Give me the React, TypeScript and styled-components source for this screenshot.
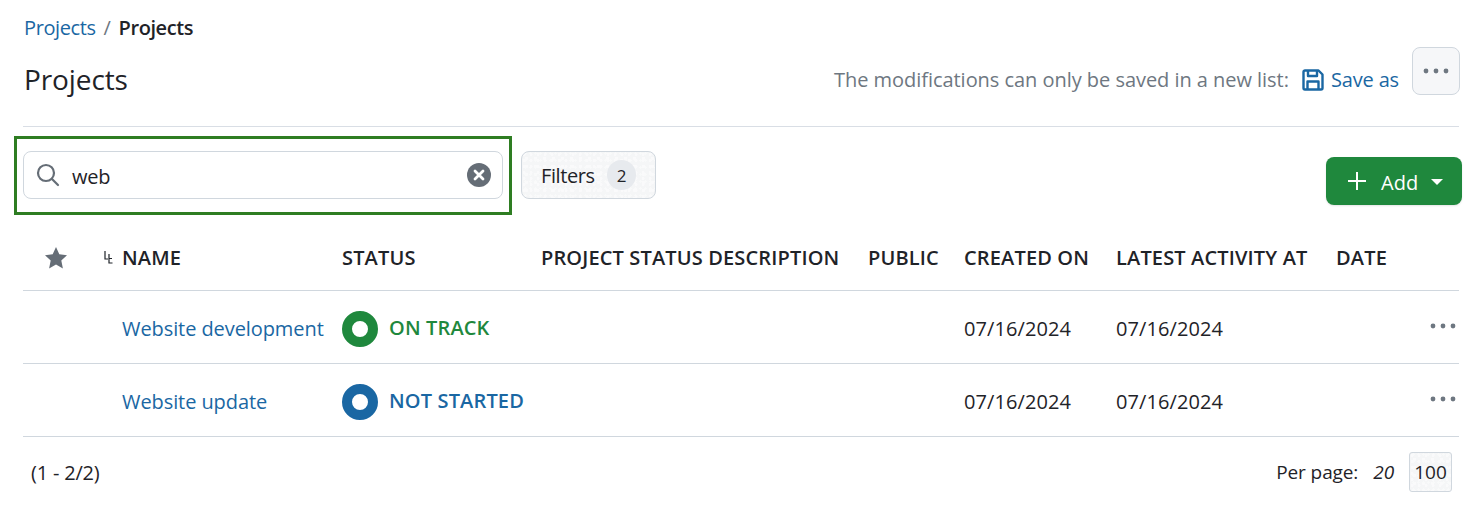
import React from 'react';
import styled, { createGlobalStyle, css } from 'styled-components';

const COLUMNS = '99px 220px 199px 327px 96px 152px 220px 123px';

const GlobalStyle = createGlobalStyle`
  html, body {
    margin: 0;
    padding: 0;
    background: #fff;
    font-family: 'Open Sans', 'Noto Sans', sans-serif;
    font-size: 20px;
    color: #1f2328;
  }
`;

// mottled fill of the secondary buttons
const speckle = css`
  background-color: #f5f6f7;
  background-image:
    radial-gradient(circle at 30% 40%, #fafafb 0 1.2px, transparent 1.6px),
    radial-gradient(circle at 70% 20%, #f9fafa 0 1px, transparent 1.4px),
    radial-gradient(circle at 50% 80%, #fafafb 0 1.4px, transparent 1.8px);
  background-size: 7px 6px, 5px 7px, 9px 8px;
`;

const Page = styled.div`
  width: 1483px;
  height: 530px;
  box-sizing: border-box;
  padding: 14px 24px 0 23px;
  overflow: hidden;
`;

const Breadcrumb = styled.nav`
  display: flex;
  align-items: center;
  gap: 8px;
  height: 28px;
  line-height: 28px;
  padding-left: 1px;
  font-size: 20px;
  letter-spacing: -0.4px;
`;

const Crumb = styled.a`
  color: #1a67a3;
`;

const Separator = styled.span`
  color: #6e7781;
`;

const CurrentCrumb = styled.span`
  font-weight: 600;
  color: #1f2328;
`;

const Header = styled.header`
  display: flex;
  align-items: center;
  justify-content: space-between;
  height: 85px;
  padding: 0 0 9px 1px;
  box-sizing: border-box;
  border-bottom: 1px solid #d9dee5;
`;

const Title = styled.h1`
  margin: 0 0 2px;
  font-size: 28px;
  font-weight: 400;
  letter-spacing: -0.1px;
  color: #1f2328;
`;

const HeaderActions = styled.div`
  display: flex;
  align-items: center;
`;

const Notice = styled.span`
  color: #6e7781;
  letter-spacing: -0.04px;
`;

const SaveLink = styled.a`
  display: flex;
  align-items: center;
  gap: 7px;
  margin-left: 13px;
  color: #1a67a3;
  letter-spacing: -0.15px;
`;

const MoreButton = styled.button`
  display: flex;
  align-items: center;
  justify-content: center;
  width: 48px;
  height: 48px;
  margin: 0 -1px 18px 13px;
  padding: 0;
  background: #f6f7f9;
  border: 1px solid #d0d7de;
  border-radius: 8px;
`;

const Toolbar = styled.div`
  display: flex;
  align-items: flex-start;
  height: 98px;
  padding-top: 25px;
  box-sizing: border-box;
`;

const Highlight = styled.div`
  display: flex;
  box-sizing: border-box;
  margin: -16px 0 0 -9px;
  padding: 12px 6px 13px 6px;
  border: 3px solid #2e7d22;
  width: 498px;
  height: 79px;
`;

const SearchBox = styled.label`
  display: flex;
  flex: 1;
  align-items: center;
  box-sizing: border-box;
  height: 48px;
  padding: 0 11px 0 12px;
  gap: 12px;
  border: 1px solid #d0d7de;
  border-radius: 8px;
  background: #fff;
`;

const SearchValue = styled.span`
  flex: 1;
  padding-top: 2px;
  letter-spacing: -0.2px;
`;

const FiltersButton = styled.button`
  display: flex;
  align-items: center;
  gap: 12px;
  box-sizing: border-box;
  height: 48px;
  width: 135px;
  margin: -1px 0 0 9px;
  padding: 0 19px;
  font: inherit;
  letter-spacing: -0.4px;
  color: #1f2328;
  border: 1px solid #d0d7de;
  border-radius: 8px;
  ${speckle}
`;

const Badge = styled.span`
  display: flex;
  align-items: center;
  justify-content: center;
  width: 30px;
  height: 30px;
  border-radius: 50%;
  font-size: 17px;
  background: #e7eaee;
`;

const AddButton = styled.button`
  display: flex;
  align-items: center;
  gap: 15px;
  box-sizing: border-box;
  width: 136px;
  height: 48px;
  margin: 5px -3px 0 auto;
  padding: 0 0 0 22px;
  font: inherit;
  color: #fff;
  background: #1f883d;
  border: none;
  border-radius: 8px;
  box-shadow: 0 1px 2px rgba(31, 35, 40, 0.12);
`;

const AddLabel = styled.span`
  padding-top: 3px;
  margin-right: -2px;
`;

const Caret = styled.span`
  width: 0;
  height: 0;
  margin-top: 2px;
  border-left: 6px solid transparent;
  border-right: 6px solid transparent;
  border-top: 6px solid #fff;
`;

const Row = styled.div`
  display: grid;
  grid-template-columns: ${COLUMNS};
  align-items: center;
  height: 73px;
  box-sizing: border-box;
  border-bottom: 1px solid #d0d7de;
`;

const HeadRow = styled(Row)`
  height: 66px;
  font-weight: 600;
  letter-spacing: 0.15px;
  font-size: 20px;
`;

const StarCell = styled.div`
  display: flex;
  align-items: center;
  padding-left: 21px;
`;

const SortMark = styled.span`
  margin-left: 36px;
  display: flex;
`;

const NameLink = styled.a`
  padding-top: 3px;
  color: #1a67a3;
  letter-spacing: -0.08px;
  white-space: nowrap;
`;

const Status = styled.div<{ $color: string }>`
  display: flex;
  align-items: center;
  gap: 11px;
  font-weight: 600;
  letter-spacing: 0.15px;
  color: ${({ $color }) => $color};
  white-space: nowrap;
`;

const StatusRing = styled.span<{ $color: string }>`
  box-sizing: border-box;
  width: 36px;
  height: 36px;
  margin-top: 3px;
  border-radius: 50%;
  border: 10px solid ${({ $color }) => $color};
`;

const DateCell = styled.div`
  padding-top: 2px;
  letter-spacing: 0.1px;
`;

const RowMenu = styled.div`
  display: flex;
  justify-content: flex-end;
  padding-right: 3px;
  margin-top: -2px;
`;

const Footer = styled.footer`
  display: flex;
  align-items: center;
  justify-content: space-between;
  padding: 15px 7px 0 8px;
  font-size: 19px;
  letter-spacing: -0.1px;
`;

const RangeCount = styled.span`
  font-size: 20px;
  letter-spacing: -0.2px;
`;

const PerPage = styled.div`
  display: flex;
  align-items: center;
`;

const PageOption = styled.em`
  margin-left: 15px;
`;

const PageButton = styled.button`
  width: 43px;
  height: 40px;
  margin-left: 15px;
  padding: 0;
  font: inherit;
  color: #1f2328;
  border: 1px solid #d0d7de;
  border-radius: 3px;
  ${speckle}
`;

const Dots = () => (
  <svg width="26" height="6" viewBox="0 0 26 6" fill="#6e7781">
    <circle cx="3" cy="3" r="2.4" />
    <circle cx="13" cy="3" r="2.4" />
    <circle cx="23" cy="3" r="2.4" />
  </svg>
);

const SaveIcon = () => (
  <svg width="22" height="22" viewBox="0 0 22 22" fill="none" stroke="#1a67a3" strokeWidth="2.4" strokeLinejoin="round">
    <path d="M3 1.5h13.5l4 4V19a1.5 1.5 0 0 1-1.5 1.5H3A1.5 1.5 0 0 1 1.5 19V3A1.5 1.5 0 0 1 3 1.5z" />
    <path d="M6 1.5v5.5h9V1.5" />
    <path d="M5.5 20.5v-8h11v8" />
  </svg>
);

const SearchIcon = () => (
  <svg width="24" height="24" viewBox="0 0 24 24" fill="none" stroke="#656d76" strokeWidth="2.2" strokeLinecap="round">
    <circle cx="10" cy="10" r="8" />
    <path d="M16 16l6 6" />
  </svg>
);

const ClearIcon = () => (
  <svg width="24" height="24" viewBox="0 0 24 24">
    <circle cx="12" cy="12" r="12" fill="#656d76" />
    <path d="M8 8l8 8M16 8l-8 8" stroke="#fff" strokeWidth="2.8" strokeLinecap="round" />
  </svg>
);

const StarIcon = () => (
  <svg width="24" height="24" viewBox="0 0 24 24" fill="#656d76">
    <path d="M12 1l3.3 7.3 7.7.9-5.7 5.3 1.6 7.9L12 18.4l-6.9 4 1.6-7.9L1 9.2l7.7-.9z" />
  </svg>
);

const SortIcon = () => (
  <svg width="9" height="13" viewBox="0 0 9 13" fill="none" stroke="#1f2328" strokeWidth="1.2">
    <path d="M1 0v8h3M5 3v9h3.5M5 7.5h3" />
  </svg>
);

const PlusIcon = () => (
  <svg width="18" height="18" viewBox="0 0 18 18" stroke="#fff" strokeWidth="2">
    <path d="M9 0v18M0 9h18" />
  </svg>
);

const rows = [
  { name: 'Website development', status: 'ON TRACK', color: '#1f883d' },
  { name: 'Website update', status: 'NOT STARTED', color: '#1a67a3' },
];

const headers = ['STATUS', 'PROJECT STATUS DESCRIPTION', 'PUBLIC', 'CREATED ON', 'LATEST ACTIVITY AT', 'DATE'];

export default function App() {
  return (
    <Page>
      <GlobalStyle />
      <Breadcrumb>
        <Crumb>Projects</Crumb>
        <Separator>/</Separator>
        <CurrentCrumb>Projects</CurrentCrumb>
      </Breadcrumb>
      <Header>
        <Title>Projects</Title>
        <HeaderActions>
          <Notice>The modifications can only be saved in a new list:</Notice>
          <SaveLink>
            <SaveIcon />
            Save as
          </SaveLink>
          <MoreButton>
            <Dots />
          </MoreButton>
        </HeaderActions>
      </Header>
      <Toolbar>
        <Highlight>
          <SearchBox>
            <SearchIcon />
            <SearchValue>web</SearchValue>
            <ClearIcon />
          </SearchBox>
        </Highlight>
        <FiltersButton>
          Filters
          <Badge>2</Badge>
        </FiltersButton>
        <AddButton>
          <PlusIcon />
          <AddLabel>Add</AddLabel>
          <Caret />
        </AddButton>
      </Toolbar>
      <HeadRow>
        <StarCell>
          <StarIcon />
          <SortMark>
            <SortIcon />
          </SortMark>
        </StarCell>
        <div>NAME</div>
        {headers.map((h) => (
          <div key={h}>{h}</div>
        ))}
      </HeadRow>
      {rows.map((r) => (
        <Row key={r.name}>
          <div />
          <NameLink>{r.name}</NameLink>
          <Status $color={r.color}>
            <StatusRing $color={r.color} />
            {r.status}
          </Status>
          <div />
          <div />
          <DateCell>07/16/2024</DateCell>
          <DateCell>07/16/2024</DateCell>
          <RowMenu>
            <Dots />
          </RowMenu>
        </Row>
      ))}
      <Footer>
        <RangeCount>(1 - 2/2)</RangeCount>
        <PerPage>
          Per page:
          <PageOption>20</PageOption>
          <PageButton>100</PageButton>
        </PerPage>
      </Footer>
    </Page>
  );
}
